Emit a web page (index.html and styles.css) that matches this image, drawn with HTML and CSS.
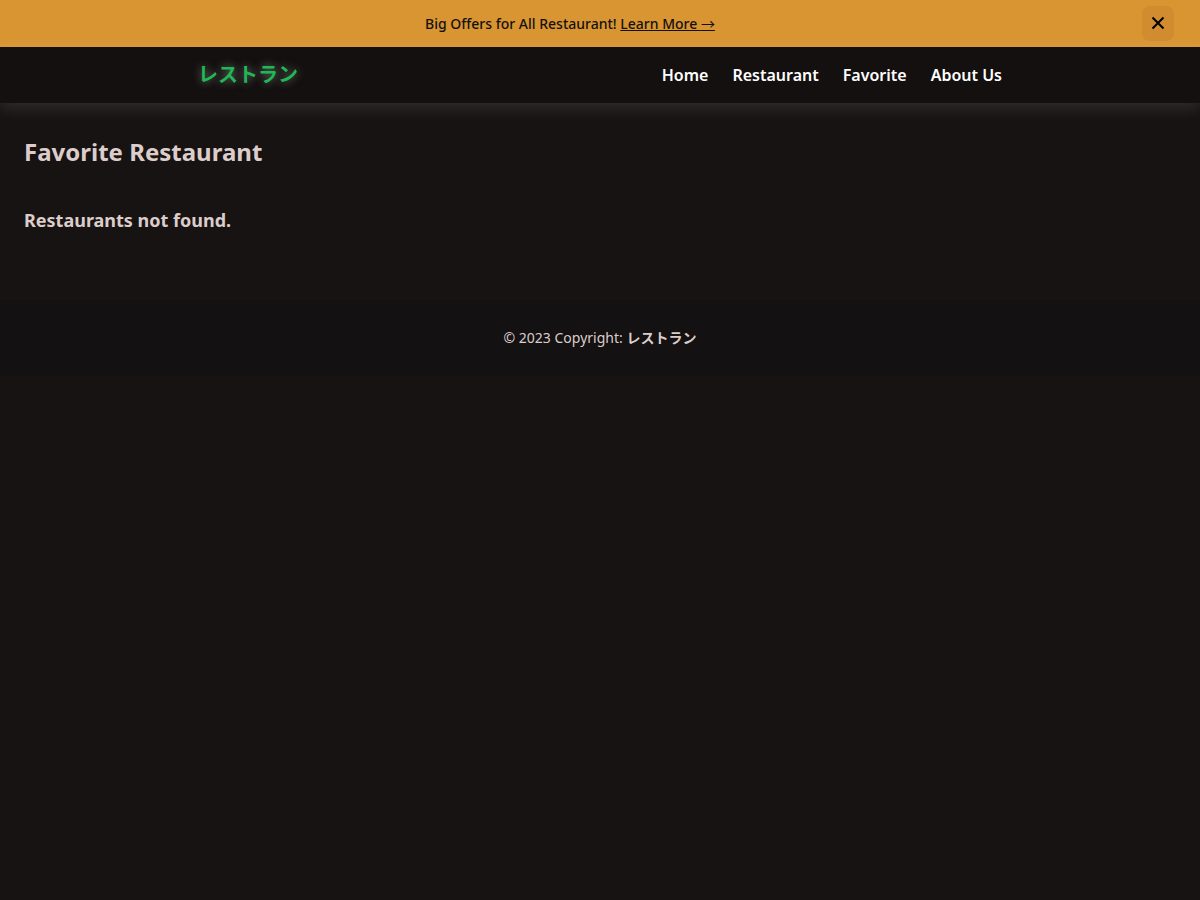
FILE: index.html
```html
<!DOCTYPE html>
<html lang="en">
<head>
<meta charset="utf-8">
<meta name="viewport" content="width=device-width, initial-scale=1">
<title>レストラン</title>
<link rel="stylesheet" href="styles.css">
</head>
<body>
<div class="banner">
  <p class="banner-text">Big Offers for All Restaurant! <a href="#offers">Learn More <span class="arrow">→</span></a></p>
  <button class="banner-close" type="button" aria-label="Close">
    <svg width="14" height="14" viewBox="0 0 14 14" aria-hidden="true"><path d="M1.5 1.5l11 11M12.5 1.5l-11 11" stroke="currentColor" stroke-width="2"/></svg>
  </button>
</div>
<header class="header">
  <a class="brand" href="#home">レストラン</a>
  <nav class="nav">
    <a href="#home">Home</a>
    <a href="#restaurant">Restaurant</a>
    <a href="#favorite">Favorite</a>
    <a href="#about">About Us</a>
  </nav>
</header>
<div class="page">
  <main class="main">
    <h1 class="title">Favorite Restaurant</h1>
    <h2 class="message">Restaurants not found.</h2>
  </main>
  <footer class="footer">© 2023 Copyright: <strong>レストラン</strong></footer>
</div>
</body>
</html>
```

FILE: styles.css
```css
* {
  box-sizing: border-box;
}

body {
  margin: 0;
  min-height: 100vh;
  background: #171312;
  color: #dccdcb;
  font-family: "Noto Sans", "Noto Sans CJK JP", sans-serif;
}

.banner {
  display: flex;
  align-items: center;
  padding: 6px 26px;
  background: #d99532;
  color: #141010;
}

.banner-text {
  flex: 1;
  margin: 0;
  padding-right: 28px;
  font-size: 14px;
  font-weight: 500;
  text-align: center;
}

.banner-text a {
  color: inherit;
}

.arrow {
  font-family: "Noto Sans CJK JP", sans-serif;
  font-weight: 400;
  line-height: 1;
}

.banner-close {
  display: flex;
  align-items: center;
  justify-content: center;
  width: 32px;
  height: 35px;
  padding: 0 0 2px;
  border: 0;
  border-radius: 8px;
  background: #d08c2f;
  color: #000;
}

.header {
  display: flex;
  align-items: center;
  justify-content: space-between;
  height: 56px;
  padding: 0 198px;
  background: #141010;
  box-shadow: 0 4px 16px rgba(255, 255, 255, 0.13);
}

.brand {
  padding-bottom: 4px;
  color: #1db954;
  font-size: 20px;
  font-weight: 700;
  text-decoration: none;
  text-shadow: 0 0 8px #777;
}

.nav {
  display: flex;
  gap: 24px;
}

.nav a {
  color: #fff;
  font-weight: 600;
  text-decoration: none;
}

.main {
  padding: 32px 24px 61px;
}

.title {
  margin: 0 0 32px;
  font-size: 24px;
  line-height: 34px;
}

.message {
  margin: 0;
  font-size: 18px;
  line-height: 38px;
}

.footer {
  padding: 24px;
  background: #131111;
  font-size: 14px;
  line-height: 28px;
  text-align: center;
}
```
